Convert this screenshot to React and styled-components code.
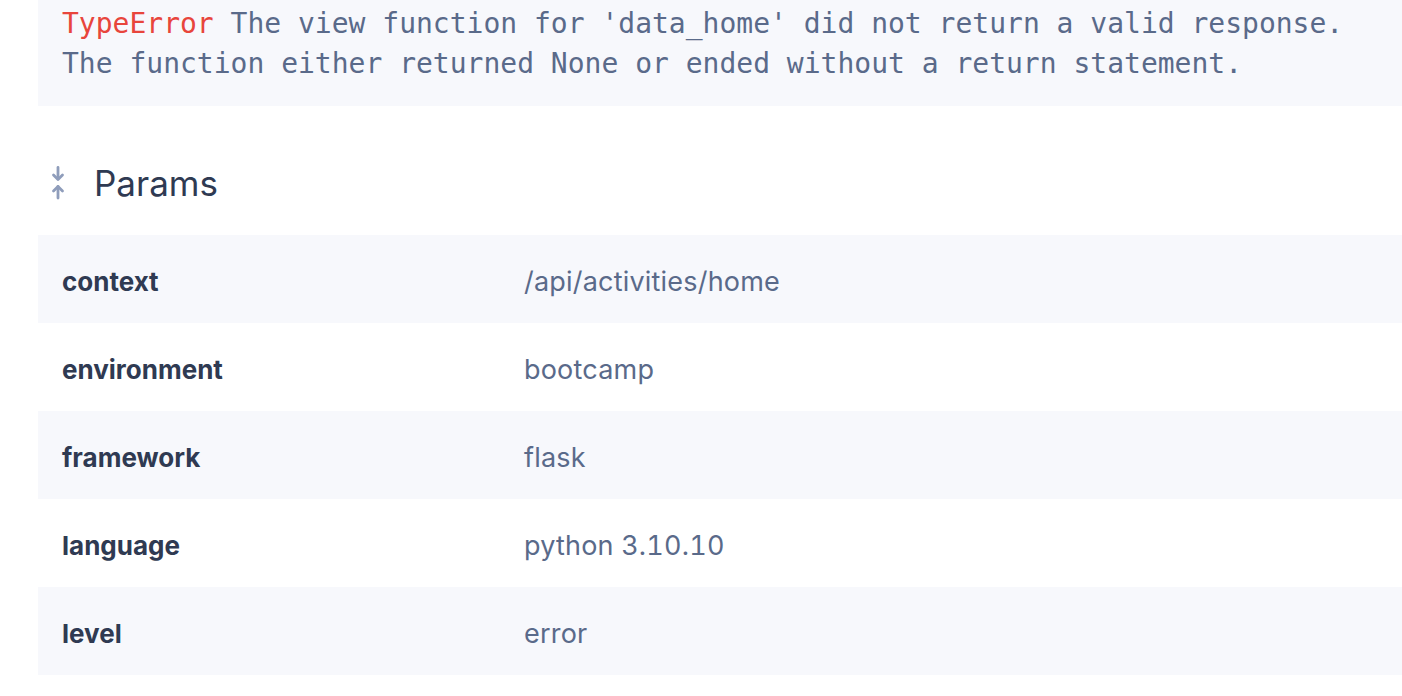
import React from "react";
import styled, { createGlobalStyle } from "styled-components";

const Global = createGlobalStyle`
  html, body { margin: 0; padding: 0; background: #ffffff; }
  body { font-family: Inter, "Noto Sans", sans-serif; }
`;

const Page = styled.div`
  padding-left: 38px;
  width: 1364px;
`;

const ErrorBlock = styled.pre`
  margin: 0;
  background: #f7f8fc;
  padding: 4px 24px 22px 24px;
  font-family: "DejaVu Sans Mono", "Liberation Mono", monospace;
  font-size: 28px;
  line-height: 40px;
  color: #5a6a8a;
  white-space: pre-wrap;
`;

const ErrType = styled.span`
  color: #e8453c;
`;

const Heading = styled.div`
  display: flex;
  align-items: center;
  gap: 28px;
  height: 129px;
  padding-left: 12px;
  padding-top: 25px;
  box-sizing: border-box;
`;

const Title = styled.h2`
  margin: 0;
  font-family: Inter, "Noto Sans", sans-serif;
  font-weight: 400;
  font-size: 35px;
  color: #2f3a52;
`;

const Table = styled.div`
  display: flex;
  flex-direction: column;
`;

const Row = styled.div`
  display: grid;
  grid-template-columns: 462px 1fr;
  align-items: center;
  height: 88px;
  padding-left: 24px;
  padding-top: 4px;
  box-sizing: border-box;
  background: ${(p) => (p.$shaded ? "#f7f8fc" : "#ffffff")};
`;

const Key = styled.div`
  font-family: Inter, "Noto Sans", sans-serif;
  font-weight: 700;
  font-size: 26px;
  color: #2f3a52;
`;

const Value = styled.div`
  font-family: Inter, "Noto Sans", sans-serif;
  font-weight: 400;
  font-size: 27px;
  letter-spacing: 0.2px;
  font-variant-numeric: tabular-nums;
  color: #5a6a8a;
`;

const CollapseIcon = () => (
  <svg width="16" height="34" viewBox="0 0 16 34" fill="none" stroke="#8f9dbb" strokeWidth="2.8" strokeLinecap="round" strokeLinejoin="round">
    <path d="M8 1.5 V13" />
    <path d="M3.5 9 L8 13.5 L12.5 9" />
    <path d="M8 20.5 V32" />
    <path d="M3.5 25 L8 20.5 L12.5 25" />
  </svg>
);

const rows = [
  ["context", "/api/activities/home"],
  ["environment", "bootcamp"],
  ["framework", "flask"],
  ["language", "python 3.10.10"],
  ["level", "error"],
];

export default function App() {
  return (
    <>
      <Global />
      <Page>
        <ErrorBlock>
          <ErrType>TypeError</ErrType>{" The view function for 'data_home' did not return a valid response.\nThe function either returned None or ended without a return statement."}
        </ErrorBlock>
        <Heading>
          <CollapseIcon />
          <Title>Params</Title>
        </Heading>
        <Table>
          {rows.map(([k, v], i) => (
            <Row key={k} $shaded={i % 2 === 0}>
              <Key>{k}</Key>
              <Value>{v}</Value>
            </Row>
          ))}
        </Table>
      </Page>
    </>
  );
}
